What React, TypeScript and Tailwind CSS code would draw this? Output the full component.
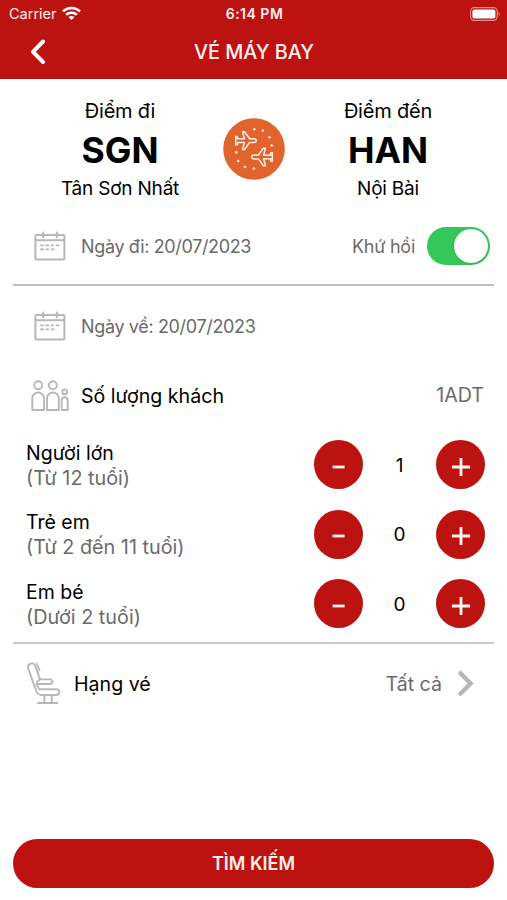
import React from "react";

function CalendarIcon() {
  return (
    <svg width="32" height="30" viewBox="0 0 32 30" fill="none" stroke="#b4b9b6" strokeWidth="2" className="shrink-0">
      <rect x="1.4" y="4" width="29" height="24.4" rx="1" />
      <path d="M1.4 9.2H30.4" />
      <path d="M9.2 .8V7.2M22.8 .8V7.2" strokeWidth="2" />
      <path d="M6.2 14.4H26.5M6.2 18.4H21.2" strokeWidth="1.9" strokeDasharray="3.6 1.6" />
    </svg>
  );
}

function PeopleIcon() {
  return (
    <svg width="38" height="32" viewBox="0 0 38 32" fill="none" stroke="#b4b9b6" strokeWidth="1.9" className="mb-[4px] shrink-0">
      <circle cx="7.2" cy="5.2" r="4" />
      <circle cx="21.8" cy="5.2" r="4" />
      <circle cx="33.7" cy="11.9" r="2.4" />
      <path d="M1.3 30V18.4a5.9 5.9 0 0 1 11.8 0V30z" strokeLinejoin="round" />
      <path d="M16 30V18.4a5.9 5.9 0 0 1 11.8 0V30z" strokeLinejoin="round" />
      <path d="M30.7 30V20.3a3 3 0 0 1 6 0V30z" strokeLinejoin="round" />
    </svg>
  );
}

function SeatIcon() {
  return (
    <svg width="34" height="43" viewBox="0 0 34 43" fill="none" stroke="#b4b9b6" strokeWidth="1.9" strokeLinecap="round" strokeLinejoin="round" className="mb-[3px] shrink-0">
      <path d="M7.6 24.6L1.2 6.2C.2 1 6.8 -.2 8.3 4L13 17.4" />
      <path d="M9.8 1.6L12.6 8.4M8.6 5L10.6 9.6" strokeWidth="1.6" />
      <path d="M10 20.2L12.8 17.4H22.4C26.4 17.4 26.6 22 22.6 22H9.4" />
      <path d="M9.6 22L12.2 27.3H29.6C33.4 27.3 33.1 32.8 29.2 33H14.2C11.6 33 10.4 31.6 9.4 29L7.4 24" />
      <path d="M17.4 33.2V40.6M24.8 33.2V40.6M11 41H30.4" />
    </svg>
  );
}

function PlanesIcon() {
  const plane = "M.5 -4.2H2.2V-1.8H9.2L7.4 -8.8H9.4L14.4 -1.9H18.8C22 -1.5 22 1.5 18.8 1.9H14.4L9.4 8.8H7.4L9.2 1.8H2.2V4.2H.5Z";
  return (
    <svg width="62" height="62" viewBox="0 0 62 62" className="shrink-0">
      <circle cx="31" cy="31" r="30.8" fill="#e0642c" />
      <g fill="none" stroke="#fff1e8" strokeWidth="1.5" strokeLinejoin="round">
        <path d={plane} transform="translate(12.2 22.6)" />
        <path d={plane} transform="translate(49.8 39) rotate(180)" />
      </g>
      <g fill="#ffe3d2">
        <circle cx="31.3" cy="11.3" r="1.3" /><circle cx="39.9" cy="12.6" r="1.3" />
        <circle cx="46.4" cy="19.2" r="1.3" /><circle cx="48.8" cy="27.5" r="1.3" />
        <circle cx="13.2" cy="34.4" r="1.3" /><circle cx="15.2" cy="43" r="1.3" />
        <circle cx="22" cy="49" r="1.3" /><circle cx="30.9" cy="50.5" r="1.3" />
      </g>
    </svg>
  );
}

function Airport({ label, code, city, width }: { label: string; code: string; city: string; width: string }) {
  return (
    <div className={`flex flex-col items-center whitespace-nowrap text-black ${width}`}>
      <span className="h-6 text-[20px] leading-6 tracking-[-0.2px]">{label}</span>
      <span className="mt-[6px] h-[44px] text-[35.5px] leading-[44px] font-bold">{code}</span>
      <span className="mt-[4px] h-6 text-[19px] leading-6 tracking-[-0.2px]">{city}</span>
    </div>
  );
}

function StepButton({ plus, label }: { plus?: boolean; label: string }) {
  return (
    <button aria-label={label} className="flex size-[49px] items-center justify-center rounded-full bg-[#bc1310]">
      <svg width="20" height="20" viewBox="0 0 20 20" stroke="#fff5f3" strokeWidth="2.8" className="mt-[4px]">
        {plus ? <path d="M.9 10H19.1M10 .9V19.1" /> : <path d="M3.6 10H15.6" />}
      </svg>
    </button>
  );
}

function Passenger({ title, note, count }: { title: string; note: string; count: number }) {
  return (
    <div className="flex h-[69.6px] items-center pr-[22px] pl-[26px]">
      <div className="flex flex-1 flex-col pt-[2px] leading-[25px]">
        <span className="text-[19.5px] text-black">{title}</span>
        <span className="text-[19.8px] text-[#6a6a6a]">{note}</span>
      </div>
      <StepButton label="-" />
      <span className="w-[73px] pt-[2px] text-center text-[19px] text-black">{count}</span>
      <StepButton plus label="+" />
    </div>
  );
}

export default function App() {
  return (
    <main className="flex h-[900px] w-[507px] flex-col bg-white font-['Inter',sans-serif]">
      <header className="h-[79px] bg-[#bc1310] text-[#fff0ee]">
        <div className="grid h-[27px] grid-cols-3 items-center pr-[7px] pl-[9px]">
          <div className="flex items-center gap-[5px] text-[14.5px]">
            <span>Carrier</span>
            <svg width="19" height="15" viewBox="0 0 19 15" fill="none" stroke="#fff" strokeWidth="2.6">
              <path d="M1 5.4C5.8 .8 13.2 .8 18 5.4" />
              <path d="M4.1 8.8C7.1 6 11.9 6 14.9 8.8" />
              <path d="M9.5 14L6.5 11C8.2 9.5 10.8 9.5 12.5 11Z" fill="#fff" stroke="none" />
            </svg>
          </div>
          <span className="text-center text-[14px] font-semibold tracking-[0.5px]">6:14 PM</span>
          <svg width="30" height="14" viewBox="0 0 30 14" className="justify-self-end">
            <rect x=".6" y=".6" width="26.6" height="12.8" rx="3.8" fill="none" stroke="#e58f8d" strokeWidth="1.1" />
            <rect x="2.4" y="2.4" width="23" height="9.2" rx="2" fill="#fff" />
            <path d="M28.6 4.8C30 5.6 30 8.4 28.6 9.2Z" fill="#e58f8d" />
          </svg>
        </div>
        <div className="grid h-[50px] grid-cols-[60px_1fr_60px] items-center">
          <svg width="16" height="26" viewBox="0 0 16 26" fill="none" stroke="#fff" strokeWidth="4" strokeLinecap="round" strokeLinejoin="round" className="ml-[30px]">
            <path d="M13 2.5L3 12.8L13 23" />
          </svg>
          <h1 className="pt-[2px] pl-px text-center text-[19.8px] font-medium">VÉ MÁY BAY</h1>
        </div>
      </header>

      <section className="flex h-[129px] pt-[20px]">
        <Airport label="Điểm đi" code="SGN" city="Tân Sơn Nhất" width="ml-[30px] w-[180px]" />
        <div className="ml-[13px] pt-[19px]"><PlanesIcon /></div>
        <Airport label="Điểm đến" code="HAN" city="Nội Bài" width="ml-[13px] w-[180px]" />
      </section>

      <section className="mx-[13px] flex h-[78px] items-center border-b-2 border-[#bdbdbd] pr-[4px] pl-[21px] text-[18px] text-[#6a6a6a]">
        <CalendarIcon />
        <span className="ml-[15px] flex-1 tracking-[-0.35px]">Ngày đi: 20/07/2023</span>
        <span className="tracking-[-0.25px]">Khứ hồi</span>
        <span className="ml-[12px] flex h-[38px] w-[63px] items-center justify-end rounded-full bg-[#35c759] pr-[2px]">
          <span className="size-[34px] rounded-full bg-white shadow-sm" />
        </span>
      </section>

      <section className="flex h-[79px] items-center pl-[34px] text-[18px] text-[#6a6a6a]">
        <CalendarIcon />
        <span className="ml-[15px] pt-px tracking-[-0.35px]">Ngày về: 20/07/2023</span>
      </section>

      <section className="flex h-[65px] items-center pr-[23px] pl-[31px]">
        <PeopleIcon />
        <span className="ml-[12px] flex-1 pb-px text-[19.6px] text-black">Số lượng khách</span>
        <span className="pb-[3px] text-[19.6px] text-[#6a6a6a]">1ADT</span>
      </section>

      <section className="h-[209px]">
        <Passenger title="Người lớn" note="(Từ 12 tuổi)" count={1} />
        <Passenger title="Trẻ em" note="(Từ 2 đến 11 tuổi)" count={0} />
        <Passenger title="Em bé" note="(Dưới 2 tuổi)" count={0} />
      </section>

      <section className="mx-[13px] mt-[3px] flex h-[84px] items-center border-t-2 border-[#c8c8c8] pr-[20px] pl-[14px]">
        <SeatIcon />
        <span className="ml-[13px] flex-1 text-[19.6px] text-black">Hạng vé</span>
        <span className="text-[19.6px] text-[#6a6a6a]">Tất cả</span>
        <svg width="17" height="27" viewBox="0 0 17 27" fill="none" stroke="#b4b9b6" strokeWidth="4.4" strokeLinecap="round" className="mb-[4px] ml-[15px]">
          <path d="M3.4 3.2L13.6 13.5L3.4 23.8" />
        </svg>
      </section>

      <button className="mx-[13px] mt-auto mb-[12px] h-[49px] shrink-0 rounded-full bg-[#bc1310] text-[18px] font-semibold text-[#fff0ee]">
        TÌM KIẾM
      </button>
    </main>
  );
}
